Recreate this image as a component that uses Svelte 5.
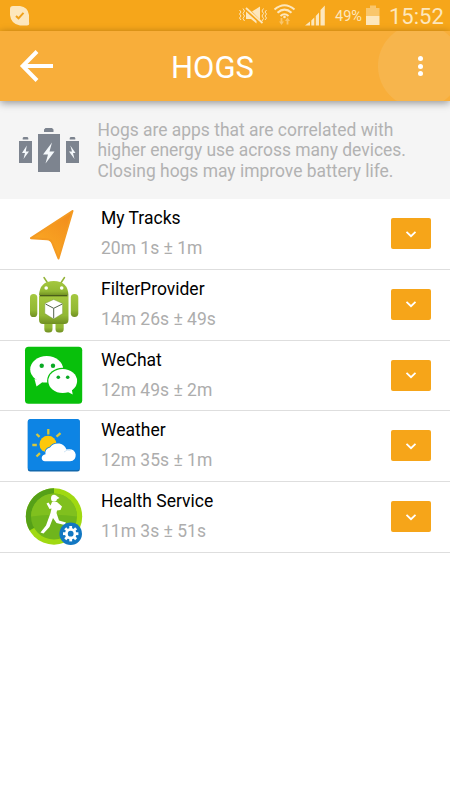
<script>
    const hogs = [
        { icon: "tracks", name: "My Tracks", gain: "20m 1s ± 1m" },
        { icon: "android", name: "FilterProvider", gain: "14m 26s ± 49s" },
        { icon: "wechat", name: "WeChat", gain: "12m 49s ± 2m" },
        { icon: "weather", name: "Weather", gain: "12m 35s ± 1m" },
        { icon: "health", name: "Health Service", gain: "11m 3s ± 51s" },
    ];

    const teeth = [0, 45, 90, 135, 180, 225, 270, 315];
</script>

<main>
    <div class="status">
        <svg class="skype" width="40" height="31" viewBox="0 0 40 31">
            <path d="M10 9Q10 6 13 6H20Q28 7 29 15V22Q30 26 26 25.500H20Q11 24 10 15Z" />
            <path class="check" d="M16 16L18.500 18.300L23.500 12.800" />
        </svg>
        <div class="tray">
            <svg width="97" height="31" viewBox="236 0 97 31">
                <g class="line">
                    <path d="M239.500 10L241 12L239.500 14L241 16L239.500 18L241 20M243 8.500L244.500 11L243 13.500L244.500 16L243 18.500L244.500 21" stroke-width="1" />
                    <path d="M266.500 10L265 12L266.500 14L265 16L266.500 18L265 20M263.500 8.500L262 11L263.500 13.500L262 16L263.500 18.500L262 21" stroke-width="1" />
                    <path d="M246 8L262.500 23" stroke-width="1.800" />
                </g>
                <path d="M246 11.500L256.500 21V23.500L251 19H246ZM252 11.500L260 6.500V19.500Z" />
                <g class="line" stroke-width="2">
                    <path d="M274.500 9.500Q284.500 1 294.500 9.500M277.500 12.800Q284.500 6.500 291.500 12.800M280.500 16Q284.500 12.500 288.500 16" />
                </g>
                <circle cx="284.500" cy="17" r="1.300" />
                <path class="dim" d="M281.500 25L279 21.500H280.600V18H282.400V21.500H284ZM287.500 17.500L290 21H288.400V24.500H286.600V21H285Z" />
                <path d="M305 25.500L310 21.500V25.500ZM311.300 20.500L314.300 17.500V25.500H311.300ZM315.800 16L319 12.500V25.500H315.800ZM320.500 10L324.800 5.500V25.500H320.500Z" />
            </svg>
            <span class="percent">49%</span>
            <svg class="battery" width="14" height="31" viewBox="0 0 14 31">
                <path class="dim" d="M4 5.500H10V8H13.500V16H0V8H4Z" />
                <path d="M0 16H13.500V25H0Z" />
            </svg>
            <span class="clock">15:52</span>
        </div>
    </div>

    <header>
        <svg class="back" width="36" height="36" viewBox="0 0 36 36">
            <path d="M35 18H5M19 3.500L4.700 18L19 32.500" />
        </svg>
        <h1>HOGS</h1>
        <div class="menu">
            <i></i>
            <i></i>
            <i></i>
        </div>
    </header>

    <div class="banner">
        <svg width="97" height="98" viewBox="0 0 97 98">
            <g fill="#7d848f">
                <path d="M22.700 38.500V37L23.500 36H27.500L28.300 37V38.500ZM19 40H32V62H19Z" />
                <path d="M44 31V28.500L45.500 27H52L53.500 28.500V31ZM38 33H60V71H38Z" />
                <path d="M69.700 38.500V37L70.500 36H74.500L75.300 37V38.500ZM66 40H79V62H66Z" />
            </g>
            <g fill="#f5f9fc">
                <path d="M26.800 44.500L22 52H25L23.500 58L29 50.500H25.800Z" />
                <path d="M52 41.500L43 53.500H48L45.500 62.500L54.500 50.500H49.500Z" />
                <path d="M70.300 44.500L75.500 52H73L74.500 58L69 50.500H72Z" />
            </g>
        </svg>
        <p>
            Hogs are apps that are correlated with<br />
            higher energy use across many devices.<br />
            Closing hogs may improve battery life.
        </p>
    </div>

    <ul>
        {#each hogs as hog}
            <li>
                <svg class="icon" width="101" height="70" viewBox="0 0 101 70">
                    {#if hog.icon == "tracks"}
                        <defs>
                            <linearGradient id="arrow" x1="1" y1="0" x2=".3" y2="1">
                                <stop offset="0" stop-color="#f18a1c" />
                                <stop offset="1" stop-color="#fbab24" />
                            </linearGradient>
                        </defs>
                        <path d="M72.500 12L31 39.200L47 40.300Q51 40.500 52.500 44.500L58.500 59.500Z" fill="url(#arrow)" stroke="#f49a22" stroke-width="2" stroke-linejoin="round" />
                    {:else if hog.icon == "android"}
                        <defs>
                            <linearGradient id="green" x1="0" y1="0" x2="0" y2="1">
                                <stop offset="0" stop-color="#a5c83f" />
                                <stop offset=".7" stop-color="#92b834" />
                                <stop offset="1" stop-color="#708f22" />
                            </linearGradient>
                        </defs>
                        <path d="M44 7.500L48 13.500M64.500 7.500L60.500 13.500" stroke="#93b338" stroke-width="1.500" stroke-linecap="round" />
                        <g fill="url(#green)">
                            <rect x="44.300" y="46" width="8.200" height="16.500" rx="3.500" />
                            <rect x="55.500" y="46" width="8.200" height="16.500" rx="3.500" />
                            <rect x="30" y="24" width="7.300" height="23" rx="3.600" />
                            <rect x="70.800" y="24" width="7.500" height="23" rx="3.700" />
                            <path d="M39 25.500Q39.500 11 53.800 11Q68 11 68.500 25.500Z" />
                            <path d="M39 25.500H68.500V49.500Q68.500 54 64.500 54H43Q39 54 39 49.500Z" />
                        </g>
                        <path d="M40 25.700H67.500" stroke="#3f5212" stroke-width="1.200" />
                        <circle cx="46.200" cy="18" r="1.800" fill="#fff" />
                        <circle cx="61.700" cy="18" r="1.800" fill="#fff" />
                        <path d="M53.700 29.500L62.600 33.500V43.500L53.700 49L44.800 43.500V33.500Z" fill="#fff" stroke="#6f9130" stroke-width=".4" />
                        <path d="M45.500 34L53.700 38.300L62.300 34M53.700 38.300V48.500" fill="none" stroke="#52624a" stroke-width="1" />
                    {:else if hog.icon == "wechat"}
                        <rect x="25" y="5.800" width="57.200" height="57" rx="3.500" fill="#08c00b" />
                        <path d="M34.500 38L36.500 45.500L44 40Z" fill="#fff" />
                        <ellipse cx="46.700" cy="28.300" rx="16.500" ry="13.300" fill="#fff" />
                        <ellipse cx="62.700" cy="40" rx="15.600" ry="13.300" fill="#08c00b" />
                        <path d="M66 50L72.700 53.500L71.500 47Z" fill="#fff" />
                        <ellipse cx="62.700" cy="39.900" rx="14.400" ry="12" fill="#fff" />
                        <g fill="#0aaa24">
                            <circle cx="41.700" cy="24.700" r="2.200" />
                            <circle cx="53" cy="24.700" r="2.200" />
                            <circle cx="58.300" cy="36.300" r="1.800" />
                            <circle cx="67.700" cy="36.300" r="1.800" />
                        </g>
                    {:else if hog.icon == "weather"}
                        <rect x="27.800" y="8.500" width="52" height="52" rx="2.500" fill="#1168ad" />
                        <rect x="27.800" y="8" width="52" height="51" rx="2.500" fill="#0d84e4" />
                        <circle cx="48" cy="33.300" r="8.500" fill="#fcc80c" />
                        <path d="M48.300 18V23.500M60.500 22.200L56.500 25.700M36.500 23L39.500 25.800M32.300 34H36.800M36.500 45.500L40 42.200" stroke="#d8c83c" stroke-width="2.300" />
                        <path d="M45 50.300Q41.700 50 41.700 47Q42 43.700 45.500 43.300Q44.500 38 50 36.500Q53 31.800 59.500 32.500Q64.500 33.300 66.500 38.500Q74.500 37 75.700 43.500Q76 50 70 50.300Z" fill="#fff" stroke="#0d84e4" stroke-width="1.500" paint-order="stroke" />
                        <path d="M64 41Q67 38 70.500 39.500" fill="none" stroke="#c7dff2" stroke-width=".8" />
                    {:else}
                        <circle cx="54" cy="34.500" r="28.200" fill="#a0d911" />
                        <path d="M54 34.500V6.300A28.200 28.200 0 0 0 29.600 48.600Z" fill="#55a018" />
                        <circle cx="54" cy="34.500" r="23" fill="#6fb51c" />
                        <path d="M31 34.500A23 23 0 0 1 77 34.500Q54 31 31 34.500Z" fill="#80c01e" />
                        <g fill="#fff">
                            <ellipse cx="54" cy="16.200" rx="3" ry="3.500" />
                            <path d="M56 13.500L59.500 16L56.500 17.500Z" />
                            <path d="M52 20L57 20L62 24.500L60.500 28L57 28.500L56.500 31L59 38.500L66 40.500L64.500 43L56.500 41L53 36L49.500 45L43.500 51.500L40.500 50.500L46 43.500L50.500 31L51.500 26.500L49.500 27L46.500 21.500L48.500 20.500L50.500 23.500Z" />
                        </g>
                        <circle cx="70.700" cy="51.700" r="11.300" fill="#1277c2" />
                        <g stroke="#fff" stroke-width="2.800">
                            {#each teeth as angle}
                                <path d="M70.700 47V44" transform={`rotate(${angle} 70.700 51.700)`} />
                            {/each}
                        </g>
                        <circle cx="70.700" cy="51.700" r="4.300" fill="none" stroke="#fff" stroke-width="2.800" />
                    {/if}
                </svg>
                <div class="text">
                    <div class="name">{hog.name}</div>
                    <div class="gain">{hog.gain}</div>
                </div>
                <button aria-label="Show details">
                    <svg width="12" height="8" viewBox="0 0 12 8">
                        <path d="M1.500 1.800L6 6.200L10.500 1.800" />
                    </svg>
                </button>
            </li>
        {/each}
    </ul>
</main>

<style>
    :global(body) {
        background: #fff;
    }

    main {
        width: 450px;
        height: 800px;
        overflow: hidden;
        background: #fff;
        font-family: Roboto, "Liberation Sans", sans-serif;
    }

    svg {
        display: block;
        flex: none;
    }

    .status {
        display: flex;
        justify-content: space-between;
        height: 31px;
        background: #f6a61a;
        fill: #fde7bd;
        color: #fde7bd;
    }

    .status .check {
        fill: none;
        stroke: #f0a11b;
        stroke-width: 2;
    }

    .status .line {
        fill: none;
        stroke: #fde7bd;
    }

    .status .dim {
        fill: #f9c66c;
    }

    .tray {
        display: flex;
        line-height: 33px;
        white-space: nowrap;
    }

    .percent {
        width: 33px;
        padding-left: 2px;
        box-sizing: border-box;
        font-size: 14.5px;
    }

    .clock {
        width: 70px;
        padding-left: 9px;
        box-sizing: border-box;
        font-size: 22px;
    }

    header {
        position: relative;
        display: flex;
        align-items: center;
        height: 70px;
        background: #f8ae3a;
        box-shadow: 0 2px 8px rgba(0, 0, 0, 0.4);
    }

    .back {
        margin-left: 18px;
        fill: none;
        stroke: #fff;
        stroke-width: 4;
    }

    h1 {
        margin: 3px 0 0 117px;
        flex: 1;
        font-size: 31px;
        font-weight: 400;
        line-height: 70px;
        color: #fff;
    }

    .menu {
        width: 72px;
        height: 70px;
        display: flex;
        flex-direction: column;
        align-items: center;
        justify-content: center;
        gap: 2.5px;
        padding-left: 12px;
        box-sizing: border-box;
        background: radial-gradient(circle at 42px 35px, #f7b54c 41.5px, transparent 42.5px);
    }

    .menu i {
        width: 5px;
        height: 5px;
        border-radius: 50%;
        background: #fff;
    }

    .banner {
        display: flex;
        height: 98px;
        background: #f5f5f5;
    }

    .banner p {
        margin: 19px 0 0 0.5px;
        font-size: 17.45px;
        line-height: 20.4px;
        color: #b2b2b2;
        white-space: nowrap;
    }

    ul {
        margin: 0;
        padding: 0;
        list-style: none;
    }

    li {
        display: flex;
        height: 69.8px;
        border-bottom: 1px solid #dedede;
    }

    .text {
        flex: 1;
        padding-top: 8px;
    }

    .name {
        font-size: 17.5px;
        line-height: 22px;
        color: #000;
    }

    .gain {
        margin-top: 8px;
        font-size: 17.5px;
        line-height: 22px;
        color: #adadad;
    }

    button {
        display: flex;
        align-items: center;
        justify-content: center;
        width: 40px;
        height: 31px;
        margin: 19px 19px 0 0;
        padding: 0;
        border: 0;
        border-radius: 2px;
        background: #f6a519;
    }

    button path {
        fill: none;
        stroke: #fff;
        stroke-width: 1.8;
    }
</style>
